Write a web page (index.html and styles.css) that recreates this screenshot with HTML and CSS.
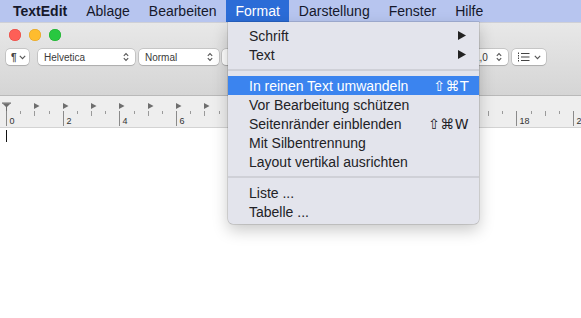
FILE: index.html
```html
<!DOCTYPE html>
<html lang="de">
<head>
<meta charset="utf-8">
<title>TextEdit – Format</title>
<link rel="stylesheet" href="styles.css">
</head>
<body>
<div class="screen">
  <div class="menubar">
    <span class="mi app">TextEdit</span>
    <span class="mi">Ablage</span>
    <span class="mi">Bearbeiten</span>
    <span class="mi active">Format</span>
    <span class="mi">Darstellung</span>
    <span class="mi">Fenster</span>
    <span class="mi">Hilfe</span>
  </div>

  <div class="window">
    <div class="toolbar">
      <div class="lights">
        <span class="light red"></span>
        <span class="light yellow"></span>
        <span class="light green"></span>
      </div>
      <div class="controls">
        <div class="ctl para"><span class="pilcrow">¶</span><svg class="chev" width="7" height="5" viewBox="0 0 7 5"><path d="M0.8 0.8 L3.5 3.6 L6.2 0.8" fill="none" stroke="#555" stroke-width="1.1"/></svg></div>
        <div class="ctl pop font"><span>Helvetica</span><svg class="ud" width="6" height="10" viewBox="0 0 6 10"><path d="M0.8 3.8 L3 1.6 L5.2 3.8 M0.8 6.2 L3 8.4 L5.2 6.2" fill="none" stroke="#555" stroke-width="1.1"/></svg></div>
        <div class="ctl pop style"><span>Normal</span><svg class="ud" width="6" height="10" viewBox="0 0 6 10"><path d="M0.8 3.8 L3 1.6 L5.2 3.8 M0.8 6.2 L3 8.4 L5.2 6.2" fill="none" stroke="#555" stroke-width="1.1"/></svg></div>
        <div class="ctl pop size"><span>12</span><svg class="ud" width="6" height="10" viewBox="0 0 6 10"><path d="M0.8 3.8 L3 1.6 L5.2 3.8 M0.8 6.2 L3 8.4 L5.2 6.2" fill="none" stroke="#555" stroke-width="1.1"/></svg></div>
        <div class="ctl pop spacing"><span>1,0</span><svg class="ud" width="6" height="10" viewBox="0 0 6 10"><path d="M0.8 3.8 L3 1.6 L5.2 3.8 M0.8 6.2 L3 8.4 L5.2 6.2" fill="none" stroke="#555" stroke-width="1.1"/></svg></div>
        <div class="ctl list"><svg width="13" height="10" viewBox="0 0 13 10"><path d="M1.5 0.5v1.5M1.5 3v1.5M1.5 5.5v1.5M1.5 8v1.5" stroke="#444" stroke-width="1"/><path d="M4 1.5h8.5M4 5h8.5M4 8.5h8.5" stroke="#444" stroke-width="1.1"/></svg><svg class="chev" width="7" height="5" viewBox="0 0 7 5"><path d="M0.8 0.8 L3.5 3.6 L6.2 0.8" fill="none" stroke="#555" stroke-width="1.1"/></svg></div>
      </div>
    </div>

    <div class="ruler">
      <svg width="581" height="31" viewBox="0 0 581 31">
        <g fill="#6e6e6e">
          <path d="M2 6.5h9v1.2h-9z"/>
          <path d="M2.5 7.5h8l-4 4z"/>
          <path d="M34 7l5.5 3-5.5 3z"/>
          <path d="M63 7l5.5 3-5.5 3z"/>
          <path d="M91 7l5.5 3-5.5 3z"/>
          <path d="M119 7l5.5 3-5.5 3z"/>
          <path d="M148 7l5.5 3-5.5 3z"/>
          <path d="M176 7l5.5 3-5.5 3z"/>
          <path d="M204 7l5.5 3-5.5 3z"/>
        </g>
        <path d="M6.5 11v4" stroke="#6e6e6e" stroke-width="1"/>
        <path stroke="#9a9a9a" stroke-width="1" fill="none"
          d="M20.5 15v3M49.5 15v3M77.5 15v3M105.5 15v3M134.5 15v3M162.5 15v3M190.5 15v3M219.5 15v3M474.5 15v3M502.5 15v3M531.5 15v3M559.5 15v3
             M34.5 15v5M91.5 15v5M148.5 15v5M204.5 15v5M488.5 15v5M545.5 15v5"/>
        <path stroke="#8a8a8a" stroke-width="1" fill="none"
          d="M6.5 15v15M63.5 15v15M119.5 15v15M176.5 15v15M516.5 15v15M573.5 15v15"/>
        <g class="rnum">
          <text x="9.5" y="28">0</text>
          <text x="66.5" y="28">2</text>
          <text x="122.5" y="28">4</text>
          <text x="179.5" y="28">6</text>
          <text x="519.5" y="28">18</text>
          <text x="576.5" y="28">20</text>
        </g>
      </svg>
    </div>

    <div class="doc"><span class="caret"></span></div>
  </div>

  <div class="menu">
    <div class="item"><span>Schrift</span><svg class="sub" width="8" height="9" viewBox="0 0 8 9"><path d="M0 0L8 4.5L0 9z" fill="#222"/></svg></div>
    <div class="item"><span>Text</span><svg class="sub" width="8" height="9" viewBox="0 0 8 9"><path d="M0 0L8 4.5L0 9z" fill="#222"/></svg></div>
    <div class="sep"></div>
    <div class="item hl"><span>In reinen Text umwandeln</span><span class="key">⇧⌘T</span></div>
    <div class="item"><span>Vor Bearbeitung schützen</span></div>
    <div class="item"><span>Seitenränder einblenden</span><span class="key">⇧⌘W</span></div>
    <div class="item"><span>Mit Silbentrennung</span></div>
    <div class="item"><span>Layout vertikal ausrichten</span></div>
    <div class="sep"></div>
    <div class="item"><span>Liste ...</span></div>
    <div class="item"><span>Tabelle ...</span></div>
  </div>
</div>
</body>
</html>
```

FILE: styles.css
```css
* { box-sizing: border-box; }

html, body {
  margin: 0;
  padding: 0;
  background: #ffffff;
}

body {
  width: 581px;
  height: 318px;
  overflow: hidden;
  font-family: "Liberation Sans", Arial, "DejaVu Sans", sans-serif;
}

.screen {
  position: relative;
  width: 581px;
  height: 318px;
}

/* ---------- menu bar ---------- */
.menubar {
  display: flex;
  height: 22px;
  padding-left: 3.5px;
  background: #b7c5ef;
  font-size: 14px;
  line-height: 22px;
  color: #15182b;
}

.mi {
  padding: 0 9.5px;
  white-space: nowrap;
}

.mi.app { font-weight: bold; }

.mi.active {
  background: #2b6cd7;
  color: #ffffff;
}

/* ---------- window ---------- */
.window {
  display: flex;
  flex-direction: column;
  height: 296px;
  background: #ffffff;
}

.toolbar {
  height: 74px;
  background: linear-gradient(#e8e8e8, #d5d5d5);
  border-top: 1px solid #cfd0d6;
  border-bottom: 1px solid #b9b9b9;
  padding: 6px 6px 0 6px;
}

.lights {
  display: flex;
  gap: 8px;
  padding-left: 3px;
}

.light {
  width: 12px;
  height: 12px;
  border-radius: 50%;
}
.light.red { background: #fe5f57; box-shadow: inset 0 0 0 0.5px #e2463f; }
.light.yellow { background: #febc2e; box-shadow: inset 0 0 0 0.5px #dfa023; }
.light.green { background: #28c840; box-shadow: inset 0 0 0 0.5px #1aab29; }

.controls {
  display: flex;
  align-items: center;
  margin-top: 8px;
  height: 16px;
}

.ctl {
  display: flex;
  align-items: center;
  height: 16px;
  background: #ffffff;
  border-radius: 4px;
  box-shadow: 0 0 0 0.5px rgba(0,0,0,0.22), 0 0.5px 1px rgba(0,0,0,0.12);
  font-size: 10px;
  color: #3a3a3a;
  white-space: nowrap;
}

.para {
  width: 23px;
  padding: 0 3px 0 5px;
  justify-content: space-between;
}
.pilcrow { font-size: 10px; font-weight: bold; color: #444; }

.pop {
  justify-content: space-between;
  padding: 0 6px 0 6px;
}
.pop.font { width: 97px; margin-left: 9px; }
.pop.style { width: 80px; margin-left: 4px; }
.pop.size { width: 44px; margin-left: 3px; }
.pop.spacing { width: 42px; margin-left: auto; padding-left: 8px; }

.list {
  width: 34px;
  margin-left: 4px;
  margin-right: 29px;
  padding: 0 5px 0 5px;
  justify-content: space-between;
}

/* ---------- ruler ---------- */
.ruler {
  height: 32px;
  background: #eeeeee;
  border-bottom: 1px solid #d3d3d3;
}
.ruler svg { display: block; }

.rnum text {
  font-family: "Liberation Sans", Arial, sans-serif;
  font-size: 9px;
  fill: #333333;
}

.doc {
  flex: 1;
  padding: 2px 0 0 6px;
}

.caret {
  display: block;
  width: 1px;
  height: 12px;
  background: #111111;
}

/* ---------- dropdown menu ---------- */
.menu {
  position: absolute;
  left: 228px;
  top: 22px;
  width: 251px;
  padding: 4px 0 3px 0;
  background: #e3e4ec;
  border-radius: 0 0 5px 5px;
  box-shadow: 0 0 0 0.5px rgba(0,0,0,0.22), 0 6px 16px rgba(0,0,0,0.22);
  font-size: 14px;
  color: #222226;
}

.item {
  display: flex;
  align-items: center;
  justify-content: space-between;
  height: 19px;
  padding: 0 13px 0 21px;
  white-space: nowrap;
}

.item.hl {
  background: #3b84ef;
  color: #ffffff;
}

.key {
  font-family: "DejaVu Sans", "Liberation Sans", sans-serif;
  font-size: 14px;
  margin-right: -3px;
  letter-spacing: 0.5px;
}

.sep {
  height: 2px;
  margin: 5px 0;
  background: #cfd0d7;
}
```
